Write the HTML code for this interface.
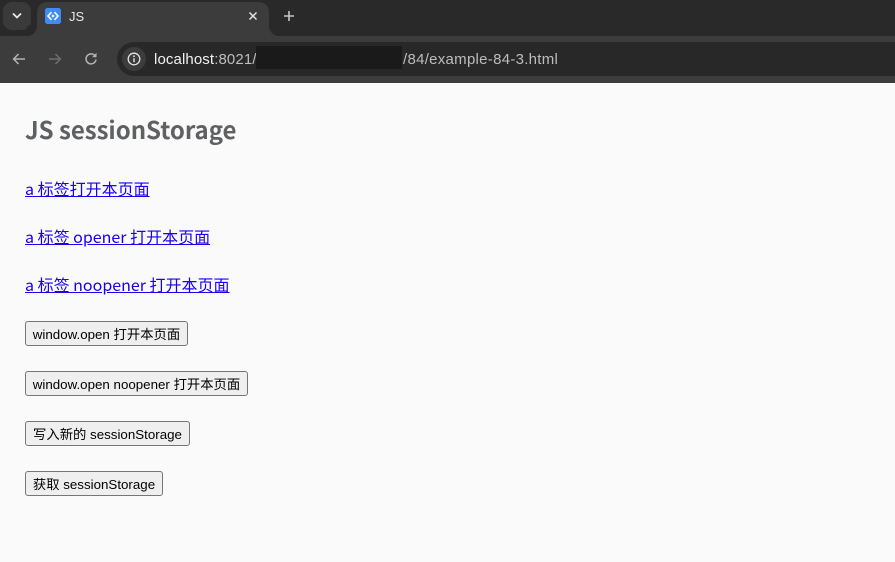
<!DOCTYPE html>
<html lang="zh-CN">
<head>
<meta charset="utf-8">
<title>JS</title>
<style>
html,body{margin:0;padding:0;width:895px;height:562px;overflow:hidden;background:#fafafa}
*{box-sizing:border-box}
.abs{position:absolute;white-space:nowrap}
#tabbar{position:absolute;left:0;top:0;width:895px;height:36px;background:#292929}
#tabsearch{position:absolute;left:3px;top:2px;width:28px;height:28px;border-radius:9px;background:#3a3a3a}
#tab{position:absolute;left:37px;top:2px;width:232px;height:34px;background:#3c3c3c;border-radius:10px 10px 0 0}
.flare{position:absolute;top:26px;width:10px;height:10px;background:#3c3c3c}
.flare i{display:block;width:10px;height:10px;background:#292929}
#toolbar{position:absolute;left:0;top:36px;width:895px;height:47px;background:#3c3c3c}
#omni{position:absolute;left:117px;top:42px;width:778px;height:34px;border-radius:17px 0 0 17px;background:#282828}
#infobg{position:absolute;left:122px;top:47px;width:24px;height:24px;border-radius:50%;background:#3c3c3c}
#mask{position:absolute;left:256px;top:46px;width:146px;height:23px;background:#1a1a1a}
.url{font:15px "Liberation Sans",sans-serif;top:50px;line-height:18px}
#h{left:25px;top:111px;font:700 24px/36px "Noto Sans CJK SC","Liberation Sans",sans-serif;color:#5f6064;letter-spacing:-.03px}
.lnk{left:25px;font:16px/24px "Noto Sans CJK SC","Liberation Sans",sans-serif;color:#1a00ee;text-decoration:underline}
.btn{position:absolute;left:25px;height:25px;border:1px solid #767676;border-radius:3px;background:#efefef;color:#000;font:13.33px/25px "Liberation Sans","Noto Sans CJK SC",sans-serif;padding:0 6px;white-space:nowrap;text-align:center}
svg{position:absolute}
</style>
</head>
<body>
<div id="tabbar"></div>
<div id="tabsearch"></div>
<svg style="left:11px;top:11px" width="12" height="10" viewBox="0 0 12 10"><path d="M2 2.500l4 4 4-4" fill="none" stroke="#e8e8e8" stroke-width="1.800"/></svg>
<div class="flare" style="left:27px"><i style="border-bottom-right-radius:10px"></i></div>
<div id="tab"></div>
<div class="flare" style="left:269px"><i style="border-bottom-left-radius:10px"></i></div>
<svg style="left:45px;top:8px" width="16" height="16" viewBox="0 0 16 16"><rect width="16" height="16" rx="2.500" fill="#3f8cf5"/><path d="M6.500 4.200L3 8l3.500 3.800M9.500 4.200L13 8l-3.500 3.800" fill="none" stroke="#fff" stroke-width="1.600"/><path d="M8 6.400L9.600 8 8 9.600 6.400 8z" fill="#fff"/></svg>
<div class="abs" style="left:69px;top:9px;font:13px/15px 'Liberation Sans',sans-serif;color:#e8e8e8">JS</div>
<svg style="left:247px;top:10px" width="12" height="12" viewBox="0 0 12 12"><path d="M2.500 2.500l7 7M9.500 2.500l-7 7" stroke="#e3e3e3" stroke-width="1.500" fill="none"/></svg>
<svg style="left:282px;top:9px" width="14" height="14" viewBox="0 0 14 14"><path d="M7 2v10M2 7h10" stroke="#c8c8c8" stroke-width="1.600" fill="none"/></svg>

<div id="toolbar"></div>
<svg style="left:11px;top:51px" width="16" height="16" viewBox="0 0 16 16"><path d="M14 8H3M7.500 3L2.600 8l4.900 5" fill="none" stroke="#b4b4b4" stroke-width="1.500"/></svg>
<svg style="left:47px;top:51px" width="16" height="16" viewBox="0 0 16 16"><path d="M2 8h11M8.500 3l4.900 5-4.900 5" fill="none" stroke="#6e6e6e" stroke-width="1.500"/></svg>
<svg style="left:83px;top:51px" width="16" height="16" viewBox="0 0 16 16"><path d="M13 8.500A5 5 0 1 1 11.500 4.300L13 5.600" fill="none" stroke="#b4b4b4" stroke-width="1.500"/><path d="M13.500 1.800v4.400H9.100z" fill="#b4b4b4"/></svg>
<div id="omni"></div>
<div id="infobg"></div>
<svg style="left:127px;top:52px" width="14" height="14" viewBox="0 0 14 14"><circle cx="7" cy="7" r="5.800" fill="none" stroke="#e3e3e3" stroke-width="1.300"/><path d="M7 6.200v4" stroke="#e3e3e3" stroke-width="1.400"/><circle cx="7" cy="4.200" r=".9" fill="#e3e3e3"/></svg>
<div class="abs url" style="left:154px;top:51px;color:#f0f0f0;letter-spacing:.11px">localhost<span style="color:#bdbdbd">:8021/</span></div>
<div id="mask"></div>
<div class="abs url" style="left:403px;top:51px;color:#bdbdbd;letter-spacing:.28px">/84/example-84-3.html</div>

<div class="abs" id="h">JS sessionStorage</div>
<a class="abs lnk" style="top:176px">a 标签打开本页面</a>
<a class="abs lnk" style="top:224px">a 标签 opener 打开本页面</a>
<a class="abs lnk" style="top:272px">a 标签 noopener 打开本页面</a>
<div class="btn" style="top:321px;width:163px">window.open 打开本页面</div>
<div class="btn" style="top:371px;width:223px">window.open noopener 打开本页面</div>
<div class="btn" style="top:421px;width:165px">写入新的 sessionStorage</div>
<div class="btn" style="top:471px;width:138px">获取 sessionStorage</div>
</body>
</html>
